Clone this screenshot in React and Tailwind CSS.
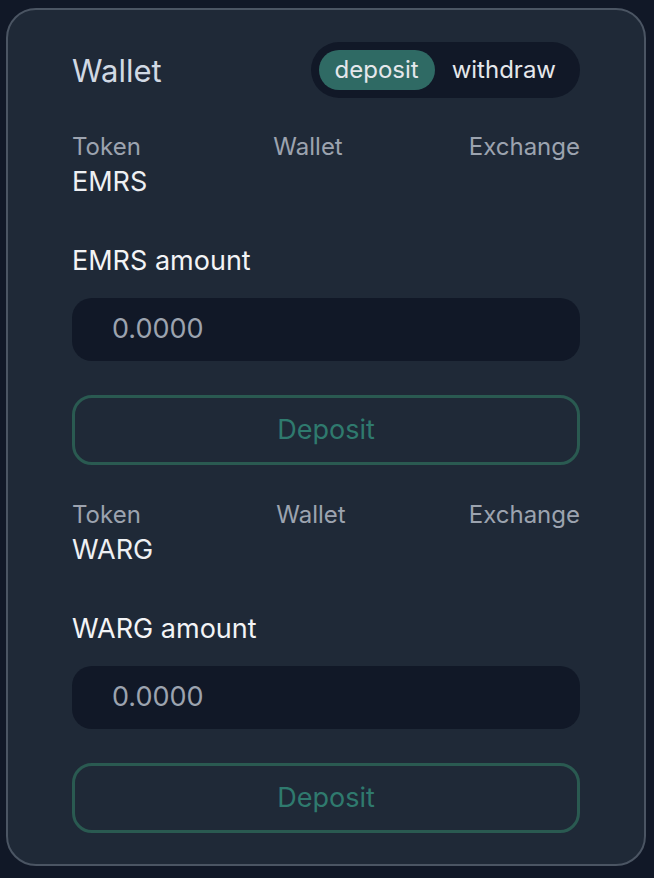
import React from "react";

const font = { fontFamily: "Inter, 'Noto Sans', sans-serif" };

function Section({ symbol }) {
  return (
    <div className="flex flex-col">
      <div className="flex justify-between">
        <div className="flex flex-col">
          <span className="text-[24px] leading-[30px] text-[#9ca3af]">Token</span>
          <span className="text-[27px] leading-[40px] text-[#eef0f3]">{symbol}</span>
        </div>
        <div className="flex flex-col">
          <span className="text-[24px] leading-[30px] text-[#9ca3af]">Wallet</span>
        </div>
        <div className="flex flex-col">
          <span className="text-[24px] leading-[30px] text-[#9ca3af]">Exchange</span>
        </div>
      </div>
      <div className="mt-[43px] text-[27px] leading-[32px] text-[#f3f4f6]">{symbol} amount</div>
      <div className="mt-[21px] flex h-[63px] items-center rounded-[20px] bg-[#111827] pl-[40px] text-[27px] text-[#9ca3af]">
        0.0000
      </div>
      <button className="mt-[34px] flex h-[70px] items-center justify-center rounded-[20px] border-[3px] border-[#2a5a51] text-[27px] text-[#2f7a6e]">
        Deposit
      </button>
    </div>
  );
}

export default function App() {
  return (
    <div className="min-h-[878px] bg-[#111827] pl-[6px] pt-[8px]" style={font}>
      <div className="w-[640px] rounded-[30px] border-2 border-[#4b5563] bg-[#1f2937] px-[64px] pb-[31px] pt-[32px]">
        <div className="flex h-[56px] items-center justify-between">
          <span className="pt-[3px] text-[31px] text-[#d1d9e4]">Wallet</span>
          <div className="flex h-[56px] items-center rounded-full bg-[#111827] px-[8px]">
            <span className="flex h-[40px] items-center rounded-full bg-[#2f6a64] px-[16px] text-[24px] text-[#e5e7eb]">
              deposit
            </span>
            <span className="flex h-[40px] items-center pl-[17px] pr-[16px] text-[24px] text-[#e5e7eb]">withdraw</span>
          </div>
        </div>
        <div className="mt-[34px] flex flex-col gap-[35px]">
          <Section symbol="EMRS" />
          <Section symbol="WARG" />
        </div>
      </div>
    </div>
  );
}
